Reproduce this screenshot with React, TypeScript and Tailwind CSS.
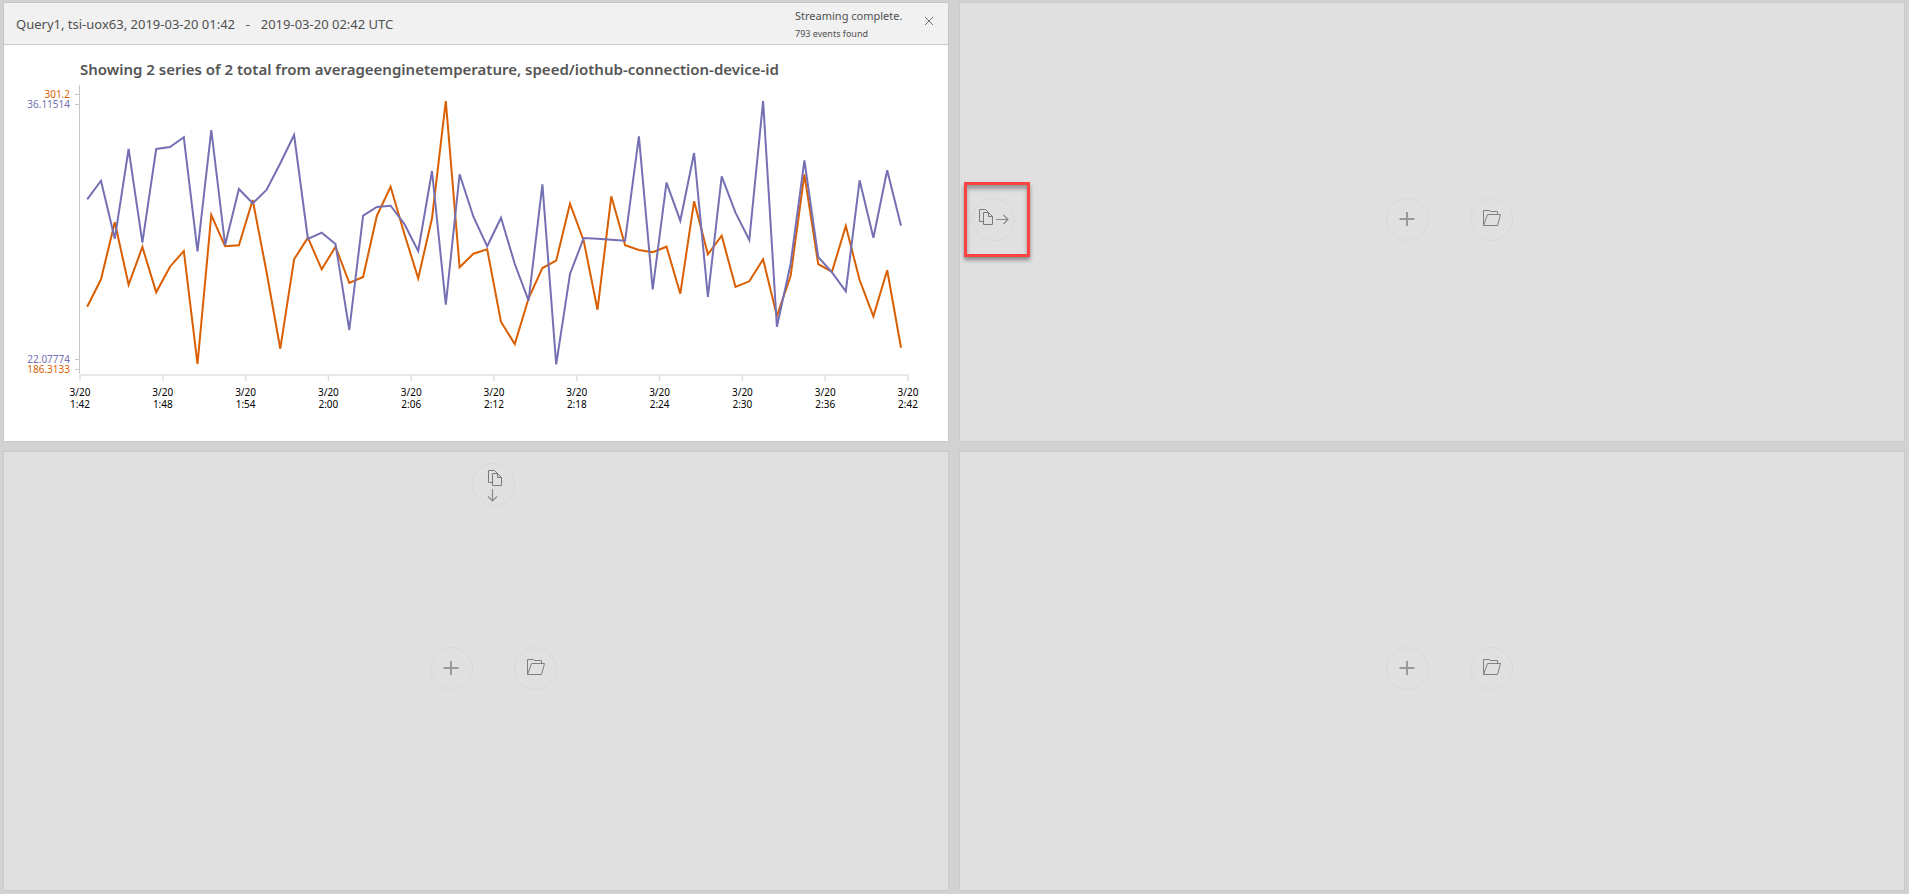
import React from "react";

const X0 = 87.2;
const STEP = 13.793;

const speed = [
  358, 302, 476, 207, 488, 207, 201, 172, 514, 150, 495, 327, 370, 330, 250, 165, 477, 458, 492, 750,
  407, 381, 377, 432, 513, 273, 674, 283, 410, 499, 413, 552, 662, 313, 853, 582, 474, 476, 479, 482,
  169, 628, 308, 422, 219, 651, 289, 398, 480, 63, 740, 552, 241, 531, 577, 634, 301, 473, 271, 437,
];

const temperature = [
  680, 598, 427, 614, 501, 637, 560, 513, 852, 405, 499, 496, 360, 575, 806, 538, 473, 568, 500, 609,
  591, 407, 320, 462, 595, 415, 63, 562, 521, 508, 726, 792, 655, 564, 542, 371, 482, 689, 349, 496,
  510, 517, 500, 641, 364, 523, 467, 621, 604, 538, 708, 588, 283, 552, 575, 438, 600, 709, 571, 803,
];

const times = ["1:42", "1:48", "1:54", "2:00", "2:06", "2:12", "2:18", "2:24", "2:30", "2:36", "2:42"];

const toPoints = (values: number[]) =>
  values.map((v, i) => `${(X0 + STEP * i).toFixed(1)},${(80 + v / 3).toFixed(1)}`).join(" ");

function Chart() {
  return (
    <svg viewBox="4 45 944 396" className="block h-auto w-full" role="img" aria-label="Line chart of two series">
      <path d="M79.5 85V374M75 94.5h5M75 104.5h5M75 359.5h5M75 369.5h5" stroke="#c8c8c8" fill="none" />
      <path d="M80 375H908" stroke="#e8e8e8" strokeWidth="2" />
      {times.map((t, i) => {
        const x = 80 + i * 82.8;
        return (
          <g key={t}>
            <path d={`M${x} 375v6`} stroke="#dcdcdc" strokeWidth="1.4" />
            <text x={x} y={396} textAnchor="middle" className="fill-black text-[10px]">3/20</text>
            <text x={x} y={408} textAnchor="middle" className="fill-black text-[10px]">{t}</text>
          </g>
        );
      })}
      <g textAnchor="end" className="text-[10px]">
        <text x="70" y="98" fill="#d95f02">301.2</text>
        <text x="70" y="108" fill="#7570b3">36.11514</text>
        <text x="70" y="363" fill="#7570b3">22.07774</text>
        <text x="70" y="373" fill="#d95f02">186.3133</text>
      </g>
      <polyline points={toPoints(temperature)} fill="none" stroke="#d95f02" strokeWidth="2" />
      <polyline points={toPoints(speed)} fill="none" stroke="#7570b3" strokeWidth="2" />
    </svg>
  );
}

function PlusIcon() {
  return (
    <svg width="16" height="16" viewBox="0 0 16 16" fill="none" stroke="#999" strokeWidth="2" aria-hidden="true">
      <path d="M0.5 8h15M8 1v14" />
    </svg>
  );
}

function FolderIcon() {
  return (
    <svg width="20" height="18" viewBox="0 0 20 18" fill="none" stroke="#808080" aria-hidden="true">
      <path d="M2.5 15.5V0.5H8L9.5 1.5H16.5V4.5M2.5 15.5L6.5 4.5H19.5L16.5 15.5H2.5" />
    </svg>
  );
}

function CopyIcon({ className = "" }: { className?: string }) {
  return (
    <svg width="14" height="16" viewBox="0 0 14 16" fill="none" stroke="#7a7a7a" className={className} aria-hidden="true">
      <path d="M4 12.5H0.5V0.5H6.5L9.5 3.5M4.5 3.5H9.5L13.5 7.5V15.5H4.5ZM9.5 3.5V7.5H13.5" />
    </svg>
  );
}

function ArrowIcon() {
  return (
    <svg width="13" height="11" viewBox="0 0 13 11" fill="none" stroke="#8a8a8a" aria-hidden="true">
      <path d="M0 5.5H12M7.5 1L12 5.5L7.5 10" strokeWidth="1.2" />
    </svg>
  );
}

function ArrowDownIcon() {
  return (
    <svg width="11" height="13" viewBox="0 0 11 13" fill="none" stroke="#8a8a8a" className="mr-1.5" aria-hidden="true">
      <path d="M5.5 0V12M1 7.5L5.5 12L10 7.5" strokeWidth="1.2" />
    </svg>
  );
}

function RoundButton({ label, className = "", children }: { label: string; className?: string; children: React.ReactNode }) {
  return (
    <button
      type="button"
      aria-label={label}
      className={`flex size-[43px] items-center justify-center rounded-full border border-[#d8d8d8] ${className}`}
    >
      {children}
    </button>
  );
}

function EmptyPanel({ children }: { children?: React.ReactNode }) {
  return (
    <section className="relative flex items-center justify-center gap-[41px] border border-[#cacaca] bg-[#e0e0e0] pb-1.5 pl-[34px]">
      <RoundButton label="Add query"><PlusIcon /></RoundButton>
      <RoundButton label="Open saved query"><FolderIcon /></RoundButton>
      {children}
    </section>
  );
}

export default function App() {
  return (
    <main className="grid min-h-screen grid-cols-2 grid-rows-2 gap-x-[10px] gap-y-[9px] bg-[#d2d2d2] pt-[2px] pr-1 pb-[3px] pl-[3px] font-['Noto_Sans','Open_Sans',sans-serif]">
      <section className="flex flex-col border border-[#c6c6c6] bg-white">
        <header className="flex h-[42px] justify-between border-b border-[#cccccc] bg-[#f1f1f1] pl-3 text-[#505050]">
          <h1 className="self-center whitespace-pre text-[13px] leading-5">
            Query1, tsi-uox63, 2019-03-20 01:42 <span className="mx-1"> - </span> 2019-03-20 02:42 UTC
          </h1>
          <div className="flex items-start">
            <div className="w-[129px] pt-1">
              <p className="text-[11px] leading-[18px]">Streaming complete.</p>
              <p className="text-[9px] leading-[17px]">793 events found</p>
            </div>
            <button type="button" aria-label="Close" className="mt-[13px] mr-[14px]">
              <svg width="10" height="10" viewBox="0 0 10 10" fill="none" stroke="#707070" aria-hidden="true">
                <path d="M1 1L9 9M9 1L1 9" />
              </svg>
            </button>
          </div>
        </header>
        <div className="grid">
          <h2 className="z-10 col-start-1 row-start-1 self-start pt-3 pl-[76px] text-[15px] leading-6 font-semibold text-[#555555]">
            Showing 2 series of 2 total from averageenginetemperature, speed/iothub-connection-device-id
          </h2>
          <div className="col-start-1 row-start-1"><Chart /></div>
        </div>
      </section>
      <EmptyPanel>
        <div className="absolute inset-y-0 left-1 flex items-center pb-1.5">
          <div className="flex h-[75px] w-[66px] items-center border-[3px] border-[#fc4343] pl-[5px] shadow-[0_3px_4px_#888,inset_0_4px_4px_#999]">
            <RoundButton label="Clone to the right" className="gap-[3px]">
              <CopyIcon className="mb-1" />
              <ArrowIcon />
            </RoundButton>
          </div>
        </div>
      </EmptyPanel>
      <EmptyPanel>
        <div className="absolute inset-x-0 top-[11px] flex justify-center pl-[34px]">
          <RoundButton label="Clone below" className="flex-col gap-[3px] pt-[3px] pl-1">
            <CopyIcon />
            <ArrowDownIcon />
          </RoundButton>
        </div>
      </EmptyPanel>
      <EmptyPanel />
    </main>
  );
}
